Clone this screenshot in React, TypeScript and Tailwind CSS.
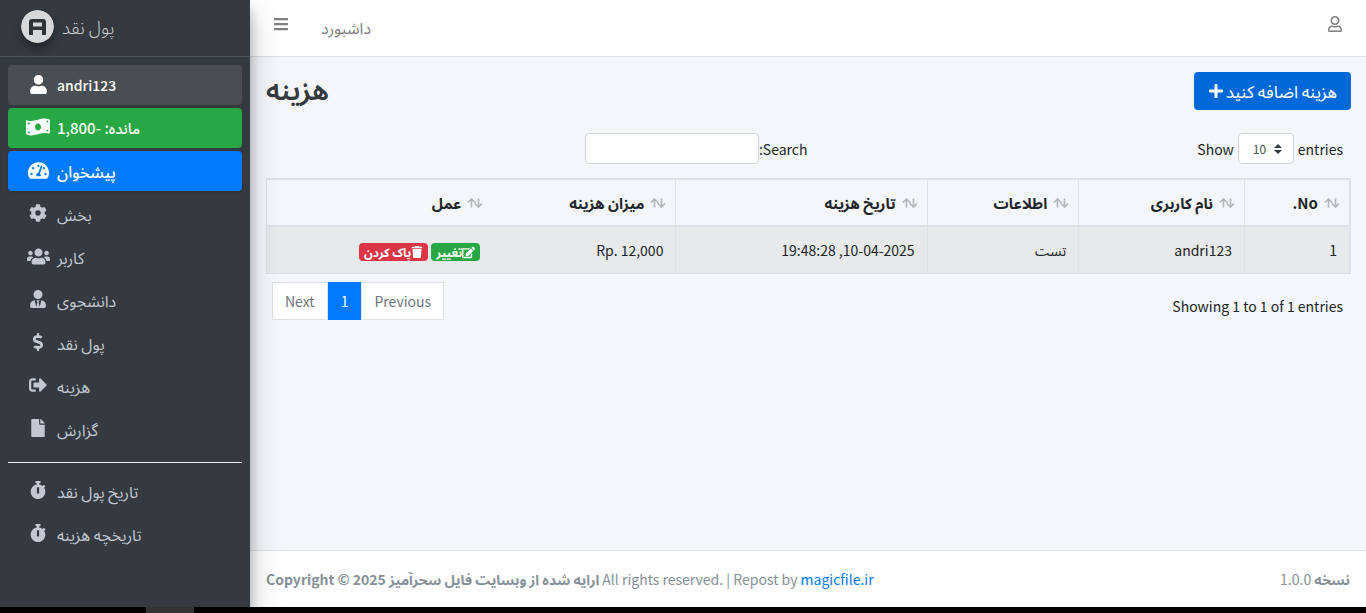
import React from 'react'
import {
  FaBars,
  FaCog,
  FaDollarSign,
  FaEdit,
  FaFile,
  FaMoneyBillWave,
  FaPlus,
  FaRegUser,
  FaSignOutAlt,
  FaStopwatch,
  FaTachometerAlt,
  FaTrash,
  FaUser,
  FaUserTie,
  FaUsers,
} from 'react-icons/fa'

const menu = [
  { icon: FaUser, label: 'andri123', size: 19, style: 'bg-[#494e53] text-sm text-white font-medium' },
  { icon: FaMoneyBillWave, label: 'مانده: -1,800', size: 24, style: 'bg-[#28a745] text-[15px] text-white font-medium' },
  { icon: FaTachometerAlt, label: 'پیشخوان', size: 21, style: 'bg-[#007bff] text-base text-white font-medium shadow' },
  { icon: FaCog, label: 'بخش', size: 18, style: 'text-base text-[#c2c7d0]' },
  { icon: FaUsers, label: 'کاربر', size: 23, style: 'text-base text-[#c2c7d0]' },
  { icon: FaUserTie, label: 'دانشجوی', size: 18, style: 'text-base text-[#c2c7d0]' },
  { icon: FaDollarSign, label: 'پول نقد', size: 18, style: 'text-base text-[#c2c7d0]' },
  { icon: FaSignOutAlt, label: 'هزینه', size: 18, style: 'text-base text-[#c2c7d0]' },
  { icon: FaFile, label: 'گزارش', size: 18, style: 'text-base text-[#c2c7d0]' },
]

const history = [
  { icon: FaStopwatch, label: 'تاریخ پول نقد', size: 18, style: 'text-base text-[#c2c7d0]' },
  { icon: FaStopwatch, label: 'تاریخچه هزینه', size: 18, style: 'text-base text-[#c2c7d0]' },
]

const columns = [
  { label: 'No.', width: 'w-[9.7%]', border: 'border-l' },
  { label: 'نام کاربری', width: 'w-[15.3%]', border: 'border-l' },
  { label: 'اطلاعات', width: 'w-[14%]', border: 'border-l' },
  { label: 'تاریخ هزینه', width: 'w-[23.2%]', border: 'border-l' },
  { label: 'میزان هزینه', width: 'w-[16.9%]', border: '' },
  { label: 'عمل', width: 'w-[20.9%]', border: 'border-l' },
]

function NavList({ items }: { items: typeof menu }) {
  return (
    <ul className="flex flex-col gap-[3px]">
      {items.map(({ icon: Icon, label, size, style }) => (
        <li key={label}>
          <a href="#" className={`flex h-10 items-center rounded pl-[17px] ${style}`}>
            <span className="mr-1.5 flex w-[26px] justify-center pb-0.5">
              <Icon size={size} />
            </span>
            {label}
          </a>
        </li>
      ))}
    </ul>
  )
}

function Logo() {
  return (
    <svg viewBox="0 0 33 33" className="size-[33px] rounded-full shadow-[0_6px_10px_rgba(0,0,0,0.35)]" aria-hidden="true">
      <circle cx="16.5" cy="16.5" r="16.5" fill="#d6d8d9" />
      <path d="M8 25V12a3 3 0 0 1 3-3h11a3 3 0 0 1 3 3v13h-4v-5h-9v5zM12 12.500v4h9v-4z" fill="#2f3336" fillRule="evenodd" />
    </svg>
  )
}

function SortIcon() {
  return (
    <svg width="16" height="12" viewBox="0 0 16 12" fill="none" stroke="#b5b7ba" strokeWidth="1.700" className="shrink-0" aria-hidden="true">
      <path d="M4.500 10.500V2M1 5.500 4.500 2 8.500 6M11.500 1.500V10M7.500 6l4 4L15 6.500" />
    </svg>
  )
}

export default function App() {
  return (
    <div className="flex min-h-screen flex-col bg-[#f4f6f9] font-['Noto_Sans_CJK_JP','Noto_Sans_Arabic','DejaVu_Sans',sans-serif] text-sm leading-6 text-[#212529]">
      <div className="flex grow">
        {/* Sidebar */}
        <aside className="z-10 w-[250px] shrink-0 bg-[#343a40] shadow-[0_14px_28px_rgba(0,0,0,0.25),0_10px_10px_rgba(0,0,0,0.22)]">
          <a href="#" className="flex h-[57px] items-center gap-2 border-b border-[#4b545c] pb-1 pl-[21px] text-lg font-light text-[#d0d2d4]">
            <Logo />
            <span>پول نقد</span>
          </a>
          <nav className="px-2 pt-2">
            <NavList items={menu} />
            <hr className="mt-[13px] mb-2 border-[#f0f1f2]" />
            <NavList items={history} />
          </nav>
        </aside>

        <div className="flex min-w-0 grow flex-col">
          {/* Top bar */}
          <header className="flex h-[57px] items-center border-b border-[#dee2e6] bg-white px-[23px] text-[#7f7f7f]">
            <button type="button" aria-label="Toggle menu" className="pb-2">
              <FaBars size={16} />
            </button>
            <a href="#" className="ml-8 pb-0.5 text-base">داشبورد</a>
            <button type="button" aria-label="Account" className="ml-auto pb-2">
              <FaRegUser size={16} />
            </button>
          </header>

          <main dir="rtl" className="grow pt-[15px] pr-[15px] pl-4">
            <div className="flex items-start justify-between">
              <button type="button" className="flex h-[38px] items-center gap-0.5 rounded bg-[#0069d9] px-3.5 text-[17px] text-white">
                هزینه اضافه کنید
                <FaPlus size={16} />
              </button>
              <h1 className="text-[28px] leading-8 font-semibold text-[#343a40]">هزینه</h1>
            </div>

            {/* Length and filter */}
            <div className="mt-[23px] flex h-[31px] items-center pr-2">
              <label dir="ltr" className="flex w-1/2 items-center justify-end gap-1 pl-1">
                Show
                <span className="relative flex">
                  <select className="h-[31px] w-14 appearance-none rounded border border-[#ced4da] bg-white pl-3.5 text-xs text-[#495057]">
                    <option>10</option>
                  </select>
                  <svg width="8" height="10" viewBox="0 0 8 10" fill="#343a40" className="absolute top-[11px] right-3" aria-hidden="true">
                    <path d="M4 0 0 4h8zM4 10 0 6h8z" />
                  </svg>
                </span>
                entries
              </label>
              <label className="-mr-[3px] flex items-center">
                Search:
                <input type="search" className="h-[31px] w-[174px] rounded border border-[#ced4da] bg-white px-2" />
              </label>
            </div>

            <table className="mt-3.5 w-full table-fixed border-separate border-spacing-0 border-t-2 border-r-2 border-[#dee2e6]">
              <thead>
                <tr>
                  {columns.map(col => (
                    <th key={col.label} className={`h-[47px] border-b-2 border-[#dee2e6] pr-[9px] text-[15px] font-bold ${col.width} ${col.border}`}>
                      <span className="flex items-center gap-1.5">
                        <SortIcon />
                        {col.label}
                      </span>
                    </th>
                  ))}
                </tr>
              </thead>
              <tbody>
                <tr className="bg-[#e8e9eb]">
                  <td className="h-[47px] border-b border-l border-[#dee2e6] pr-3">1</td>
                  <td className="border-b border-l border-[#dee2e6] pr-3">andri123</td>
                  <td className="border-b border-l border-[#dee2e6] pr-3">تست</td>
                  <td className="border-b border-l border-[#dee2e6] pr-3">10-04-2025, 19:48:28</td>
                  <td className="border-b border-[#dee2e6] pr-3">
                    <bdi dir="ltr">Rp. 12,000</bdi>
                  </td>
                  <td className="border-b border-l border-[#dee2e6] pr-3">
                    <div className="flex gap-[3px] pt-1 text-xs leading-[18px] font-bold text-white">
                      <a href="#" className="flex items-center rounded bg-[#28a745] px-[5px]">
                        <FaEdit size={13} />
                        تغییر
                      </a>
                      <a href="#" className="flex items-center rounded bg-[#dc3545] px-[5px]">
                        <FaTrash size={12} />
                        پاک کردن
                      </a>
                    </div>
                  </td>
                </tr>
              </tbody>
            </table>

            <div className="mt-2 flex items-start justify-between pr-2 pl-1.5">
              <p className="pt-3">Showing 1 to 1 of 1 entries</p>
              <div className="flex h-[38px] text-[#6c757d]">
                <button type="button" className="border border-[#dee2e6] bg-white px-3">Previous</button>
                <button type="button" className="bg-[#007bff] px-[13px] text-white">1</button>
                <button type="button" className="border border-[#dee2e6] bg-white px-3">Next</button>
              </div>
            </div>
          </main>

          <footer className="flex h-[57px] items-center justify-between border-t border-[#dee2e6] bg-white px-4 text-[#869099]">
            <p>
              <strong>Copyright © 2025 ارایه شده از وبسایت فایل سحرآمیز</strong> All rights reserved. | Repost by{' '}
              <a href="#" className="text-[#007bff]">magicfile.ir</a>
            </p>
            <p>
              <b>نسخه</b> 1.0.0
            </p>
          </footer>
        </div>
      </div>
      <div className="relative z-20 h-1.5 bg-black">
        <div className="ml-[146px] h-full w-12 bg-[#333333]" />
      </div>
    </div>
  )
}
